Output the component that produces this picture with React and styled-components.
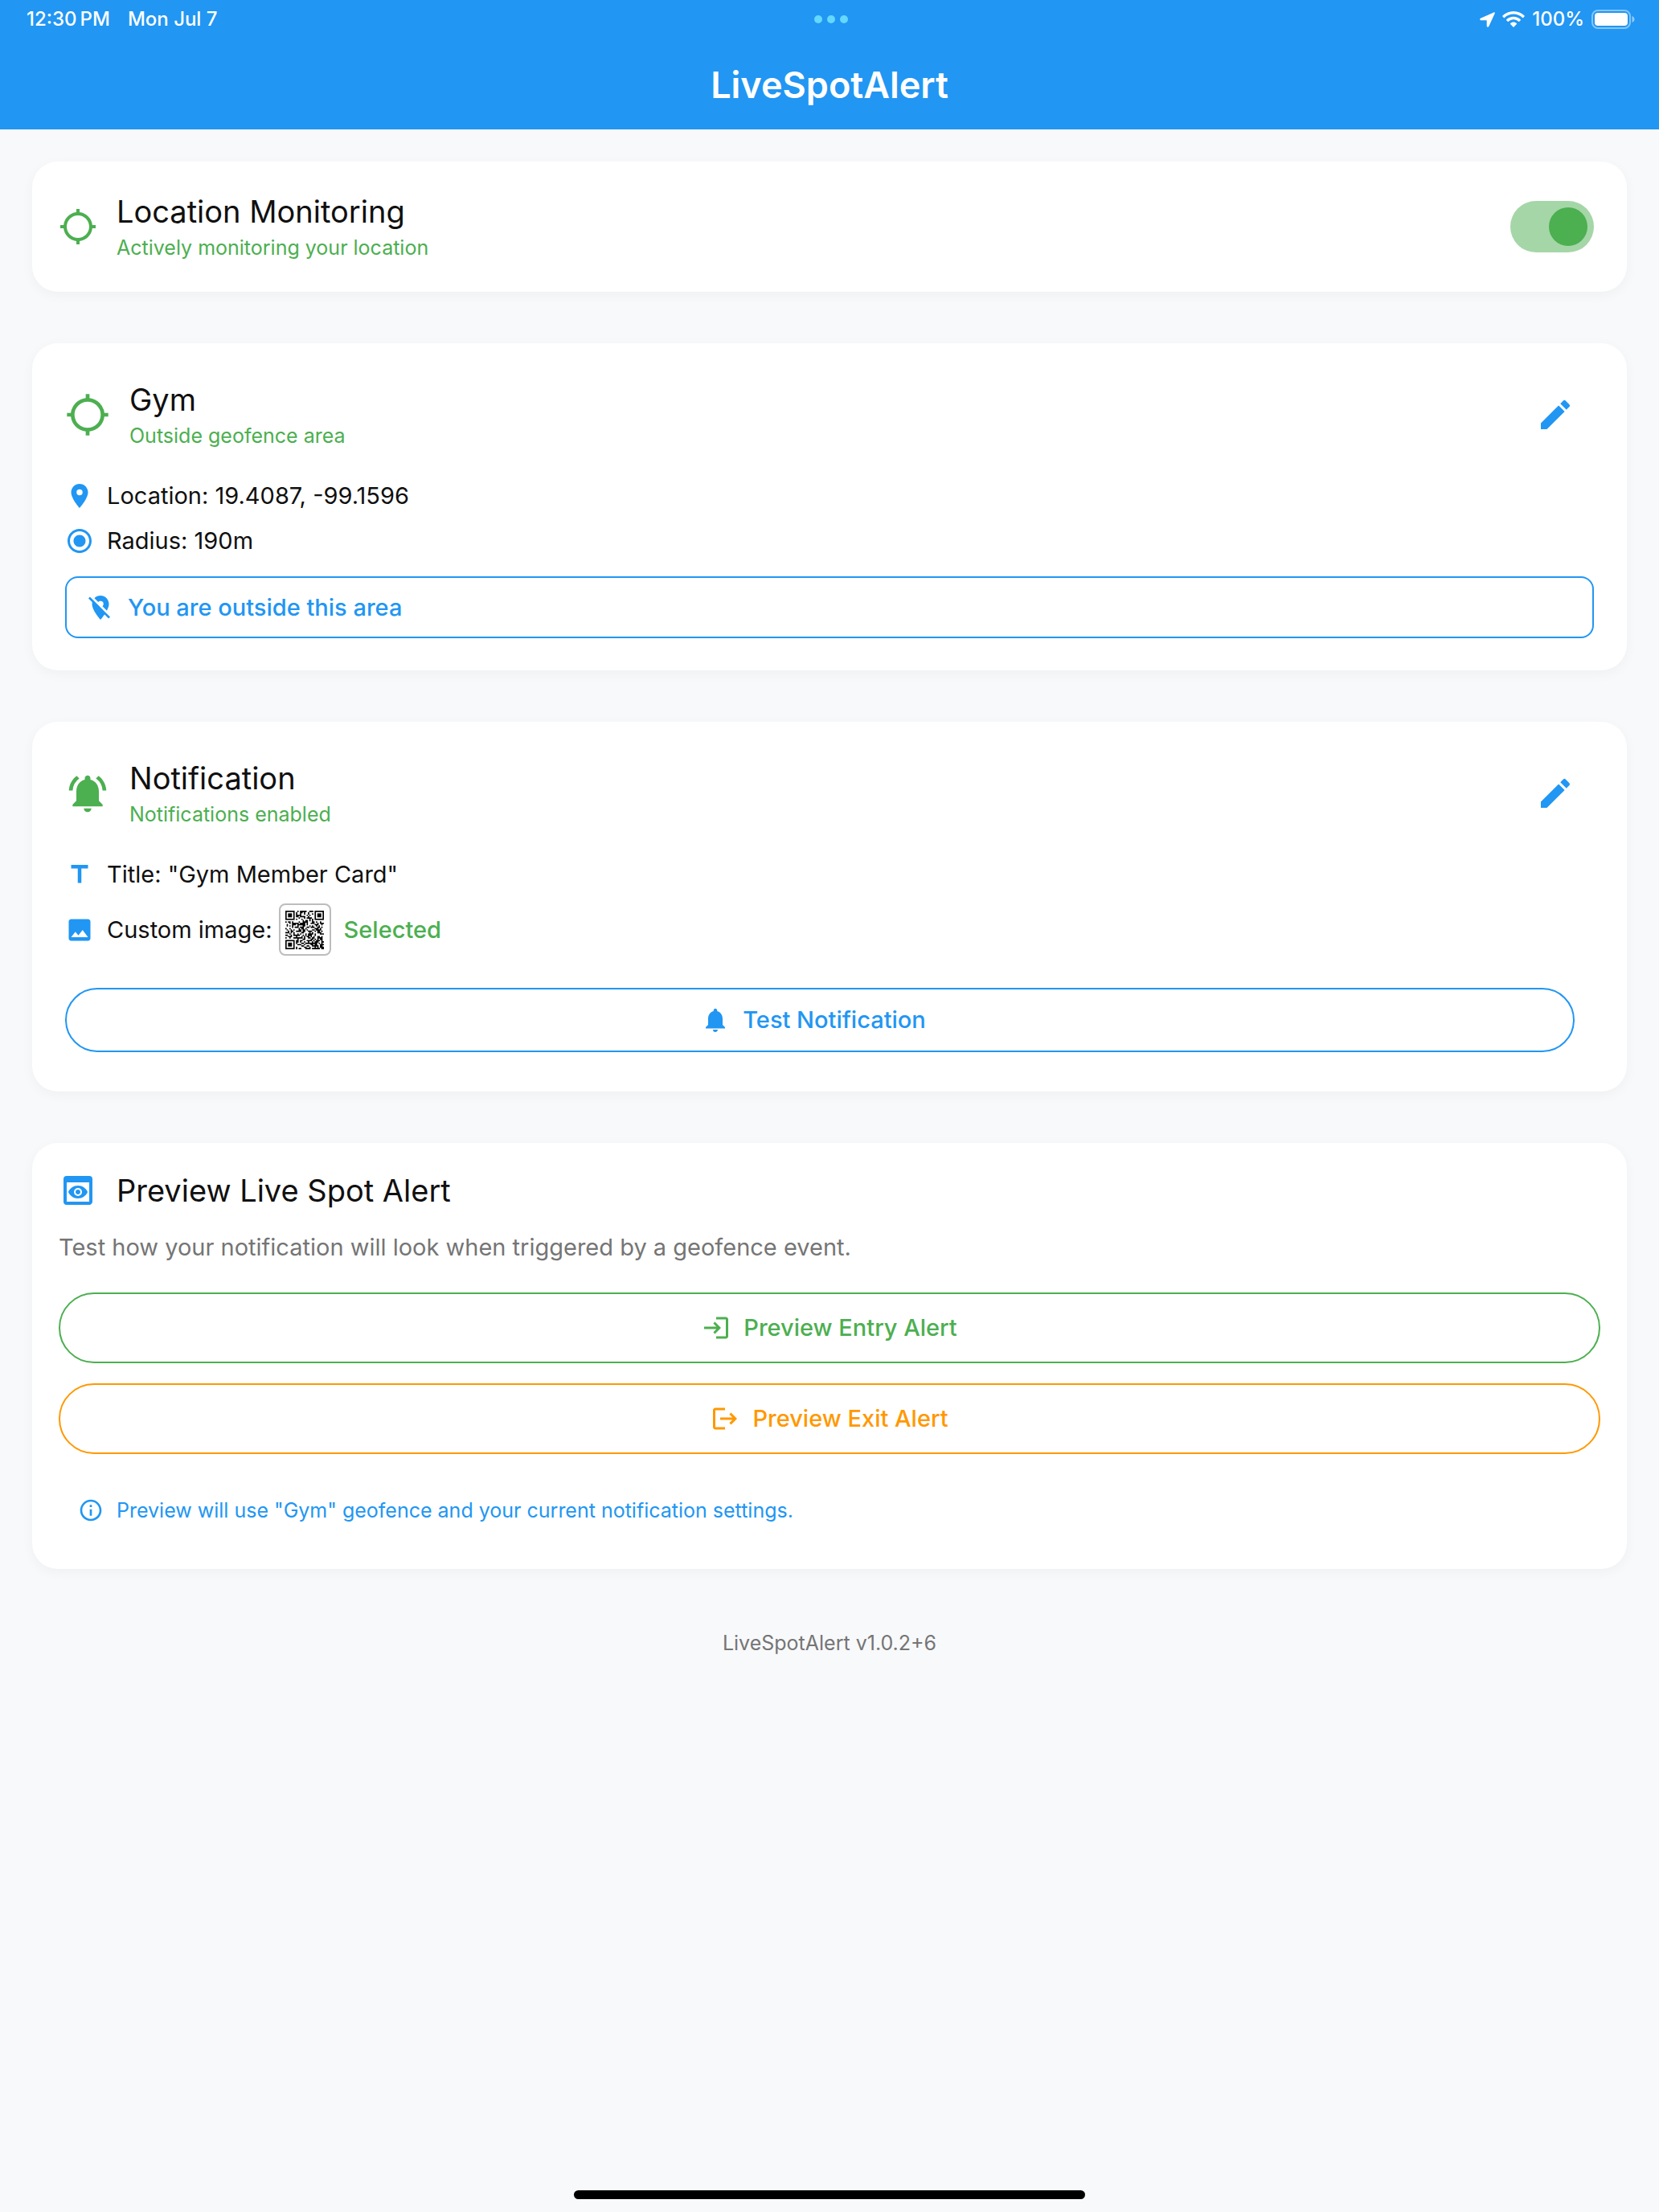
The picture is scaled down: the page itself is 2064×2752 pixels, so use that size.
import React, { useState } from 'react';
import styled, { createGlobalStyle } from 'styled-components';
import {
  MdEdit,
  MdImage,
  MdInfoOutline,
  MdLocationOff,
  MdLocationOn,
  MdLocationSearching,
  MdLogin,
  MdLogout,
  MdNotifications,
  MdNotificationsActive,
  MdPreview,
  MdRadioButtonChecked,
  MdTitle,
} from 'react-icons/md';

const color = {
  primary: '#2196f3',
  success: '#4caf50',
  successSoft: '#a5d6a7',
  warning: '#ff9800',
  ink: '#101010',
  muted: '#757575',
  page: '#f8f9fb',
};

const GlobalStyle = createGlobalStyle`
  *, *::before, *::after { box-sizing: border-box; }
  body {
    margin: 0;
    background: ${color.page};
    color: ${color.ink};
    font-family: Inter, "Liberation Sans", sans-serif;
  }
  h1, h2, p { margin: 0; font-weight: 400; }
  button { font-family: inherit; cursor: pointer; }
  svg { display: block; flex: none; }
`;

const Screen = styled.div`
  display: flex;
  flex-direction: column;
  min-height: 100vh;
`;

const Header = styled.header`
  background: ${color.primary};
  color: #fff;
`;

const StatusBar = styled.div`
  display: grid;
  grid-template-columns: 1fr auto 1fr;
  align-items: center;
  height: 48px;
  padding: 0 30px 0 33px;
  font-size: 24px;
  font-weight: 500;
  line-height: 32px;
`;

const Clock = styled.div`
  display: flex;
  gap: 22px;
`;

const Time = styled.time`
  display: flex;
  gap: 4px;
`;

const Dots = styled.button`
  display: flex;
  gap: 6px;
  padding: 0;
  border: 0;
  background: none;
`;

const Dot = styled.span`
  width: 10px;
  height: 10px;
  border-radius: 50%;
  background: #64d8ff;
`;

const Indicators = styled.div`
  display: flex;
  align-items: center;
  justify-content: flex-end;
  gap: 9px;
`;

const AppTitle = styled.h1`
  height: 113px;
  font-size: 45px;
  font-weight: 600;
  line-height: 116px;
  text-align: center;
`;

const Main = styled.main`
  display: flex;
  flex-direction: column;
  gap: 64px;
  padding: 40px;
`;

const Card = styled.section`
  padding: ${(p) => (p.$roomy ? '40px 41px' : '32px 33px')};
  border-radius: 32px;
  background: #fff;
  box-shadow: 0 4px 16px rgba(0, 0, 0, 0.04);
`;

const CardHeader = styled.div`
  display: flex;
  align-items: center;
  gap: 24px;
  min-height: ${(p) => (p.$compact ? '54px' : '98px')};
  color: ${(p) => (p.$tone ? color[p.$tone] : color.success)};
`;

const Heading = styled.div`
  flex: 1;
  padding-top: 4px;
`;

const CardTitle = styled.h2`
  color: ${color.ink};
  font-size: 38px;
  line-height: 48px;
`;

const CardStatus = styled.p`
  font-size: 25px;
  line-height: 42px;
`;

const EditButton = styled.button`
  display: grid;
  place-items: center;
  width: 96px;
  height: 96px;
  padding: 0;
  border: 0;
  border-radius: 50%;
  background: none;
  color: ${color.primary};
`;

const Toggle = styled.input`
  appearance: none;
  display: flex;
  align-items: center;
  justify-content: flex-end;
  width: 104px;
  height: 64px;
  margin: 0 8px 0 0;
  padding: 8px;
  border-radius: 32px;
  background: ${color.successSoft};
  cursor: pointer;

  &::before {
    content: "";
    width: 48px;
    height: 48px;
    border-radius: 50%;
    background: ${color.success};
  }

  &:not(:checked) {
    justify-content: flex-start;
    background: #e0e0e0;
  }

  &:not(:checked)::before {
    background: ${color.muted};
  }
`;

const Details = styled.div`
  display: flex;
  flex-direction: column;
  gap: 16px;
  margin-top: 32px;
`;

const Detail = styled.div`
  display: flex;
  align-items: center;
  gap: 16px;
  font-size: 29px;
  line-height: 40px;

  > svg { color: ${color.primary}; }
`;

const ImageValue = styled.div`
  display: flex;
  align-items: center;
  gap: 8px;
`;

const Thumbnail = styled.div`
  display: grid;
  place-items: center;
  width: 65px;
  height: 65px;
  border: 2px solid #bdbdbd;
  border-radius: 8px;
`;

const Selected = styled.span`
  color: ${color.success};
  font-weight: 500;
`;

const AreaNotice = styled.p`
  display: flex;
  align-items: center;
  gap: 16px;
  min-height: 77px;
  margin-top: 24px;
  padding: 16px 24px;
  border: 2px solid ${color.primary};
  border-radius: 16px;
  color: ${color.primary};
  font-size: 29px;
  font-weight: 500;
  line-height: 40px;
`;

const PillButton = styled.button`
  display: flex;
  align-items: center;
  justify-content: center;
  gap: 16px;
  width: 100%;
  height: ${(p) => (p.$tall ? '88px' : '80px')};
  padding: ${(p) => (p.$tall ? '0 32px' : '0 48px 0 32px')};
  border: 2px solid ${(p) => color[p.$tone]};
  border-radius: 44px;
  background: none;
  color: ${(p) => color[p.$tone]};
  font-size: 29px;
  font-weight: 500;
  line-height: 40px;
`;

const TestAction = styled.div`
  padding: 40px 24px 9px 0;
`;

const Description = styled.p`
  margin-top: 24px;
  color: ${color.muted};
  font-size: 29px;
  line-height: 40px;
`;

const PreviewActions = styled.div`
  display: flex;
  flex-direction: column;
  gap: 25px;
  margin-top: 36px;
`;

const Hint = styled.p`
  display: flex;
  align-items: center;
  gap: 16px;
  margin-top: 32px;
  padding: 21px 24px 24px;
  color: ${color.primary};
  font-size: 25px;
  line-height: 34px;
`;

const Version = styled.footer`
  margin-top: 34px;
  color: ${color.muted};
  font-size: 25px;
  line-height: 36px;
  text-align: center;
`;

const HomeIndicator = styled.div`
  align-self: center;
  width: 636px;
  max-width: 60%;
  height: 11px;
  margin: auto 0 16px;
  border-radius: 6px;
  background: #000;
`;

const QR_SIZE = 29;

function inFinder(x, y) {
  const edge = QR_SIZE - 8;
  return (x < 8 && y < 8) || (x >= edge && y < 8) || (x < 8 && y >= edge);
}

function buildModules() {
  let seed = 20250707;
  let path = '';
  for (let y = 0; y < QR_SIZE; y += 1) {
    for (let x = 0; x < QR_SIZE; x += 1) {
      seed = (seed * 1103515245 + 12345) % 2147483648;
      if (!inFinder(x, y) && seed / 2147483648 < 0.52) {
        path += `M${x} ${y}h1v1h-1z`;
      }
    }
  }
  return path;
}

const qrModules = buildModules();

function Finder({ x, y }) {
  return (
    <g>
      <rect x={x + 0.5} y={y + 0.5} width="6" height="6" fill="none" stroke="#000" />
      <rect x={x + 2} y={y + 2} width="3" height="3" />
    </g>
  );
}

function QrCode() {
  return (
    <svg width="48" height="48" viewBox="0 0 29 29" role="img" aria-label="QR code">
      <path d={qrModules} />
      <Finder x={0} y={0} />
      <Finder x={22} y={0} />
      <Finder x={0} y={22} />
    </svg>
  );
}

function LocationArrow() {
  return (
    <svg width="19" height="19" viewBox="0 0 19 19" fill="#fff" aria-hidden="true">
      <path d="M17.400.4 1 7.800c-1.300.6-1 2.500.5 2.500h6.700c.3 0 .5.200.5.500v6.500c0 1.600 2 1.900 2.600.5L18.700 1.800c.4-.9-.4-1.800-1.300-1.400z" />
    </svg>
  );
}

function Wifi() {
  return (
    <svg width="28" height="20" viewBox="0 0 28 20" fill="#fff" aria-hidden="true">
      <path d="M14 0C8.700 0 3.900 2.100.4 5.500c-.3.300-.3.700 0 1l1.500 1.500c.3.300.7.300 1 0C5.800 5.200 9.700 3.500 14 3.500s8.200 1.700 11.100 4.500c.3.300.7.300 1 0l1.500-1.500c.3-.3.300-.7 0-1C24.100 2.100 19.300 0 14 0z" />
      <path d="M14 6.700c-3.400 0-6.500 1.300-8.800 3.500-.3.300-.3.700 0 1l1.600 1.600c.3.300.7.300 1 0 1.600-1.500 3.800-2.500 6.200-2.500s4.600 1 6.200 2.500c.3.300.7.300 1 0l1.600-1.600c.3-.3.300-.7 0-1-2.300-2.200-5.400-3.500-8.800-3.500z" />
      <path d="M14 13.400c-1.500 0-2.900.6-3.900 1.500-.3.300-.3.700 0 1l3.400 3.500c.3.300.7.300 1 0l3.400-3.500c.3-.3.300-.7 0-1-1-.9-2.400-1.500-3.900-1.500z" />
    </svg>
  );
}

function Battery() {
  return (
    <svg width="54" height="24" viewBox="0 0 54 24" aria-hidden="true">
      <rect x="1" y="1" width="47" height="22" rx="7" fill="none" stroke="#fff" strokeOpacity="0.45" strokeWidth="2" />
      <rect x="4" y="4" width="41" height="16" rx="4" fill="#fff" />
      <path d="M50.500 8v8c1.700-.6 3-2.200 3-4s-1.300-3.400-3-4z" fill="#fff" fillOpacity="0.5" />
    </svg>
  );
}

export default function App() {
  const [monitoring, setMonitoring] = useState(true);

  return (
    <Screen>
      <GlobalStyle />
      <Header>
        <StatusBar>
          <Clock>
            <Time>
              <span>12:30</span>
              <span>PM</span>
            </Time>
            <span>Mon Jul 7</span>
          </Clock>
          <Dots type="button" aria-label="Multitasking">
            <Dot />
            <Dot />
            <Dot />
          </Dots>
          <Indicators>
            <LocationArrow />
            <Wifi />
            <span>100%</span>
            <Battery />
          </Indicators>
        </StatusBar>
        <AppTitle>LiveSpotAlert</AppTitle>
      </Header>

      <Main>
        <Card>
          <CardHeader>
            <MdLocationSearching size={48} />
            <Heading>
              <CardTitle as="label" htmlFor="monitoring">
                Location Monitoring
              </CardTitle>
              <CardStatus>Actively monitoring your location</CardStatus>
            </Heading>
            <Toggle
              id="monitoring"
              type="checkbox"
              role="switch"
              checked={monitoring}
              onChange={(event) => setMonitoring(event.target.checked)}
            />
          </CardHeader>
        </Card>

        <Card $roomy>
          <CardHeader>
            <MdLocationSearching size={56} />
            <Heading>
              <CardTitle>Gym</CardTitle>
              <CardStatus>Outside geofence area</CardStatus>
            </Heading>
            <EditButton type="button" aria-label="Edit geofence">
              <MdEdit size={48} />
            </EditButton>
          </CardHeader>
          <Details>
            <Detail>
              <MdLocationOn size={36} />
              <span>Location: 19.4087, -99.1596</span>
            </Detail>
            <Detail>
              <MdRadioButtonChecked size={36} />
              <span>Radius: 190m</span>
            </Detail>
          </Details>
          <AreaNotice>
            <MdLocationOff size={36} />
            You are outside this area
          </AreaNotice>
        </Card>

        <Card $roomy>
          <CardHeader>
            <MdNotificationsActive size={56} />
            <Heading>
              <CardTitle>Notification</CardTitle>
              <CardStatus>Notifications enabled</CardStatus>
            </Heading>
            <EditButton type="button" aria-label="Edit notification">
              <MdEdit size={48} />
            </EditButton>
          </CardHeader>
          <Details>
            <Detail>
              <MdTitle size={36} />
              <span>Title: "Gym Member Card"</span>
            </Detail>
            <Detail>
              <MdImage size={36} />
              <ImageValue>
                <span>Custom image:</span>
                <Thumbnail>
                  <QrCode />
                </Thumbnail>
              </ImageValue>
              <Selected>Selected</Selected>
            </Detail>
          </Details>
          <TestAction>
            <PillButton type="button" $tone="primary">
              <MdNotifications size={36} />
              Test Notification
            </PillButton>
          </TestAction>
        </Card>

        <Card>
          <CardHeader $compact $tone="primary">
            <MdPreview size={48} />
            <CardTitle>Preview Live Spot Alert</CardTitle>
          </CardHeader>
          <Description>
            Test how your notification will look when triggered by a geofence event.
          </Description>
          <PreviewActions>
            <PillButton type="button" $tall $tone="success">
              <MdLogin size={36} />
              Preview Entry Alert
            </PillButton>
            <PillButton type="button" $tall $tone="warning">
              <MdLogout size={36} />
              Preview Exit Alert
            </PillButton>
          </PreviewActions>
          <Hint>
            <MdInfoOutline size={32} />
            Preview will use "Gym" geofence and your current notification settings.
          </Hint>
        </Card>
      </Main>

      <Version>LiveSpotAlert v1.0.2+6</Version>
      <HomeIndicator />
    </Screen>
  );
}
